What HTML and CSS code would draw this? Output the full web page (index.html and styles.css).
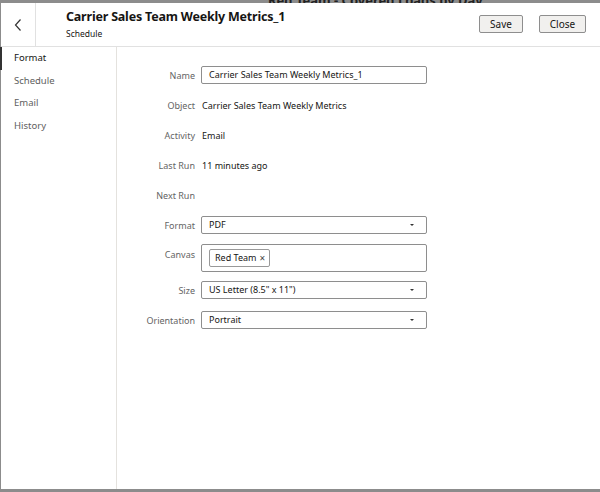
FILE: index.html
```html
<!DOCTYPE html>
<html>
<head>
<meta charset="utf-8">
<link rel="stylesheet" href="styles.css">
</head>
<body>
<div class="backdrop-text">Red Team - Covered Loads by Day</div>
<div class="dialog">
  <header class="head">
    <div class="back">
      <svg width="10" height="14" viewBox="0 0 10 14"><path d="M7.5 1.5 L2.5 7 L7.5 12.5" fill="none" stroke="#333" stroke-width="1.2"/></svg>
    </div>
    <div class="titles">
      <div class="title">Carrier Sales Team Weekly Metrics_1</div>
      <div class="subtitle">Schedule</div>
    </div>
    <div class="actions">
      <button class="btn save">Save</button>
      <button class="btn close">Close</button>
    </div>
  </header>
  <div class="body">
    <nav class="nav">
      <div class="nav-item active">Format</div>
      <div class="nav-item">Schedule</div>
      <div class="nav-item">Email</div>
      <div class="nav-item">History</div>
    </nav>
    <main class="form">
      <div class="row"><div class="label">Name</div><div class="value"><div class="input">Carrier Sales Team Weekly Metrics_1</div></div></div>
      <div class="row"><div class="label">Object</div><div class="value text">Carrier Sales Team Weekly Metrics</div></div>
      <div class="row"><div class="label">Activity</div><div class="value text">Email</div></div>
      <div class="row"><div class="label">Last Run</div><div class="value text">11 minutes ago</div></div>
      <div class="row"><div class="label">Next Run</div><div class="value text"></div></div>
      <div class="row"><div class="label">Format</div><div class="value"><div class="input select">PDF<span class="caret"></span></div></div></div>
      <div class="row canvas-row"><div class="label">Canvas</div><div class="value"><div class="input multi"><span class="chip">Red Team <span class="x">×</span></span></div></div></div>
      <div class="row"><div class="label">Size</div><div class="value"><div class="input select">US Letter (8.5" x 11")<span class="caret"></span></div></div></div>
      <div class="row"><div class="label">Orientation</div><div class="value"><div class="input select">Portrait<span class="caret"></span></div></div></div>
    </main>
  </div>
</div>
</body>
</html>
```
FILE: styles.css
```css
html, body {
  margin: 0;
  padding: 0;
}
body {
  width: 600px;
  height: 492px;
  overflow: hidden;
  background: #8c8c8c;
  font-family: "Noto Sans", "Open Sans", sans-serif;
  color: #161513;
  position: relative;
}
.backdrop-text {
  position: absolute;
  left: 268px;
  top: -9px;
  font-size: 13px;
  font-weight: bold;
  color: #222;
}
.dialog {
  position: relative;
  margin: 3px 0 0 1px;
  height: 486px;
  background: #fff;
  display: flex;
  flex-direction: column;
}
.head {
  height: 43px;
  border-bottom: 1px solid #e1e1e1;
  display: flex;
  align-items: stretch;
}
.back {
  width: 34px;
  border-right: 1px solid #e1e1e1;
  display: flex;
  align-items: center;
  justify-content: center;
}
.titles {
  flex: 1;
  padding: 5px 0 0 30px;
}
.title {
  font-size: 12.5px;
  font-weight: bold;
  line-height: 18px;
  letter-spacing: -0.2px;
}
.subtitle {
  font-size: 8.5px;
  line-height: 12px;
  margin-top: 2px;
}
.actions {
  display: flex;
  align-items: flex-start;
  gap: 16px;
  padding: 12px 14px 0 0;
}
.btn {
  font-family: inherit;
  font-size: 10px;
  height: 18px;
  padding: 0 8px;
  background: #f1f0ee;
  border: 1px solid #8e8e8e;
  border-radius: 2px;
  color: #161513;
  line-height: 16px;
}
.save { width: 44px; }
.close { width: 47px; }
.body {
  flex: 1;
  display: flex;
}
.nav {
  width: 115px;
  border-right: 1px solid #e4e2de;
}
.nav-item {
  font-size: 9.5px;
  color: #5e5e5e;
  line-height: 22.7px;
  padding-left: 12px;
  border-left: 2px solid transparent;
  margin-left: -1px;
}
.nav-item.active {
  color: #161513;
  border-left-color: #333;
}
.form {
  flex: 1;
  padding-top: 13px;
}
.row {
  display: flex;
  align-items: center;
  height: 30px;
}
.canvas-row {
  height: 35px;
  align-items: flex-start;
}
.label {
  width: 78px;
  text-align: right;
  font-size: 9px;
  color: #646464;
  padding-right: 6px;
}
.canvas-row .label {
  padding-top: 8px;
}
.value {
  font-size: 9px;
  color: #161513;
}
.canvas-row .value { padding-top: 4px; }
.value.text { padding-left: 1px; }
.input {
  height: 16px;
  border: 1px solid #8e8e8e;
  border-radius: 2px;
  padding: 0 0 0 7px;
  box-sizing: content-box;
  width: 217px;
  line-height: 16px;
  position: relative;
}
.select .caret {
  position: absolute;
  right: 12px;
  top: 7px;
  width: 0;
  height: 0;
  border-left: 2.5px solid transparent;
  border-right: 2.5px solid transparent;
  border-top: 2.5px solid #333;
}
.multi {
  height: 26px;
  display: flex;
  align-items: center;
}
.chip {
  display: inline-flex;
  align-items: center;
  height: 16px;
  border: 1px solid #999;
  border-radius: 2px;
  padding: 0 4px 0 5px;
  gap: 3px;
}
.chip .x {
  font-size: 10px;
  color: #444;
}
```
